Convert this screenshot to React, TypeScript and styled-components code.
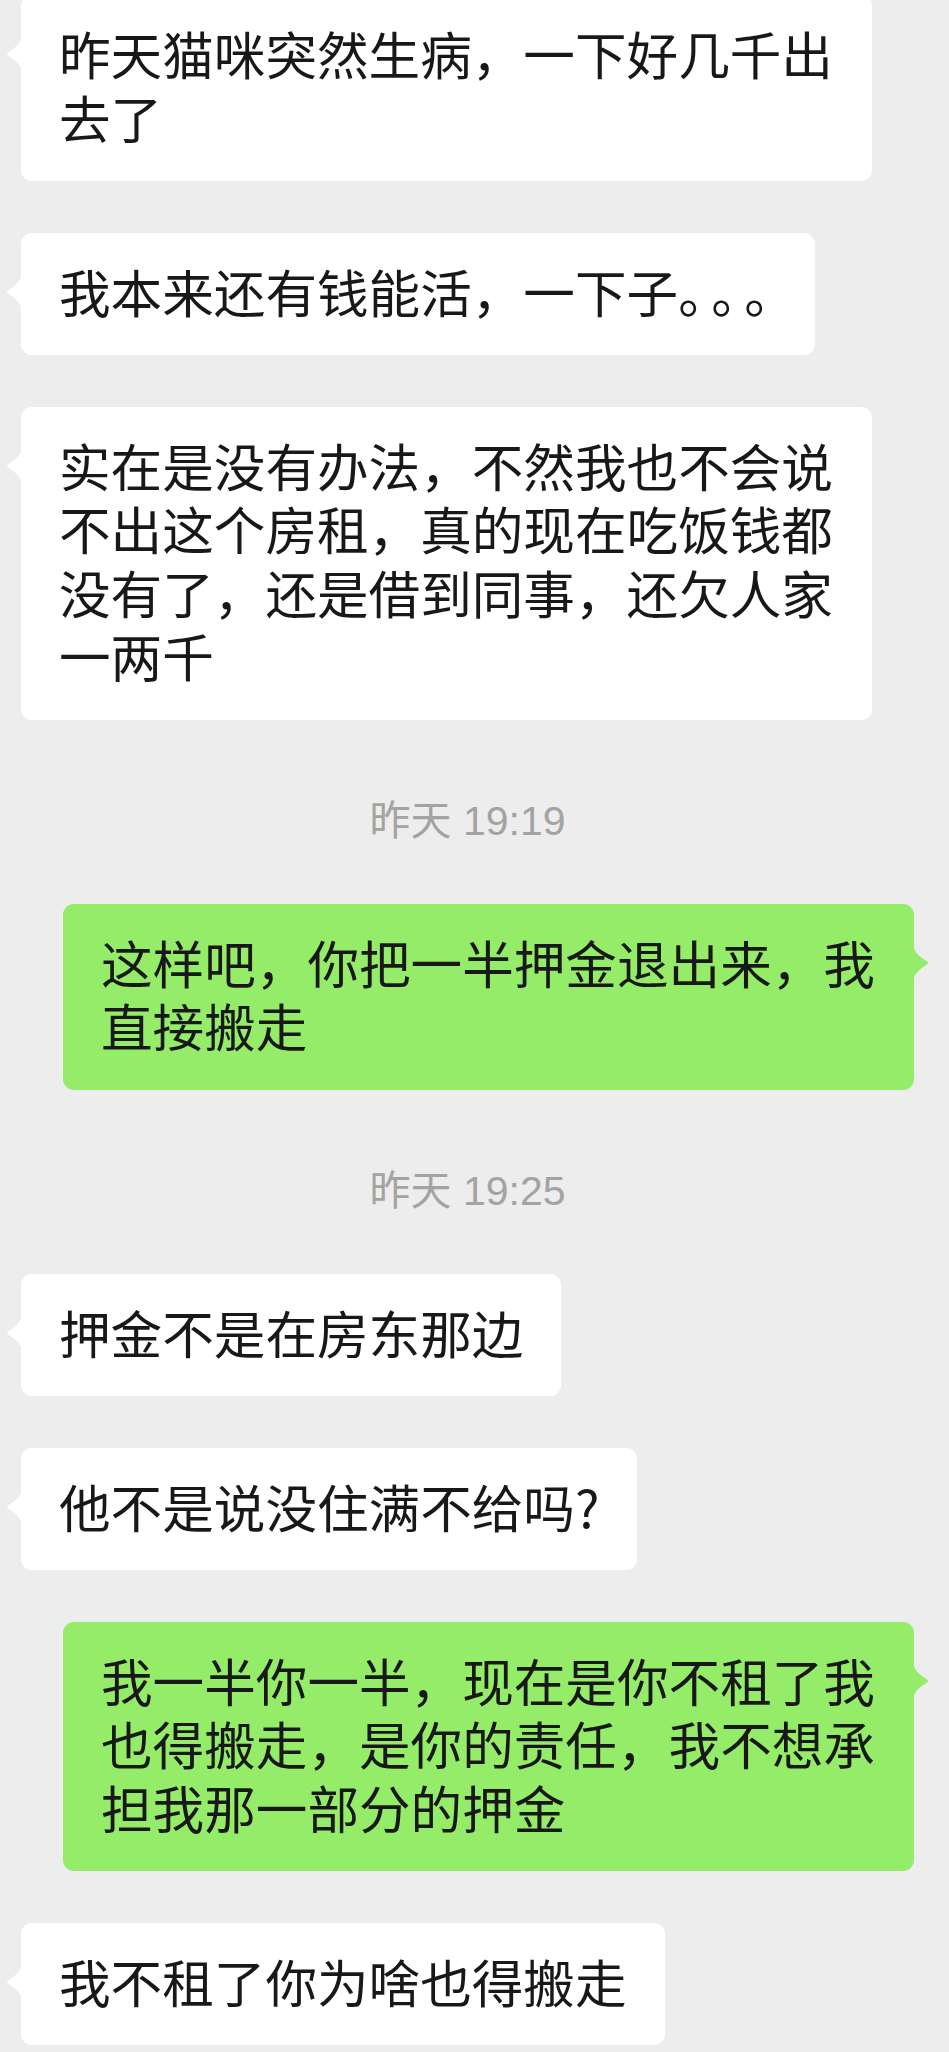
import React from 'react';
import styled, { createGlobalStyle } from 'styled-components';

const GlobalStyle = createGlobalStyle`
  html, body {
    margin: 0;
    padding: 0;
    background-color: #ededed;
  }
  body {
    font-family: "Noto Sans CJK SC", "Liberation Sans", sans-serif;
    overflow: hidden;
  }
`

const Chat = styled.div`
  display: flex;
  flex-direction: column;
  gap: 51.5px;
  padding: 0 35px 0 21px;
  /* the list is scrolled a little: the first bubble starts above the top */
  margin-top: -5px;
`

const Row = styled.div<{ $mine?: boolean }>`
  display: flex;
  justify-content: ${props => (props.$mine ? 'flex-end' : 'flex-start')};
`

const Bubble = styled.div<{ $mine?: boolean }>`
  position: relative;
  max-width: 775px;
  padding: 26px 38px 33px;
  border-radius: 11px;
  background-color: ${props => (props.$mine ? '#95ec69' : '#ffffff')};
  color: #181818;
  font-family: "Noto Sans CJK SC", "Liberation Sans", sans-serif;
  font-size: 51.6px;
  line-height: 63.5px;
`

const Tail = styled.svg<{ $mine?: boolean }>`
  position: absolute;
  top: 39px;
  width: 16px;
  height: 40px;
  ${props => (props.$mine ? 'right: -15px; transform: scaleX(-1);' : 'left: -15px;')}
`

// 连续的句号在截图里是被压缩过的
const Dots = styled.span`
  text-spacing-trim: space-all;
  letter-spacing: -18.6px;
`

const Time = styled.div`
  padding: 26px 0 6px;
  text-align: center;
  font-family: "Liberation Sans", "Noto Sans CJK SC", sans-serif;
  font-size: 41px;
  line-height: 49px;
  color: #a3a3a3;
`

const Msg = ({ mine, children }: { mine?: boolean; children: React.ReactNode }) => (
  <Row $mine={mine}>
    <Bubble $mine={mine}>
      <Tail $mine={mine} viewBox="0 0 16 40">
        <path
          d="M16 0 C16 9 9 14 2 18.5 Q0 20 2 21.5 C9 26 16 31 16 40 Z"
          fill={mine ? '#95ec69' : '#ffffff'}
        />
      </Tail>
      {children}
    </Bubble>
  </Row>
)

const App = () => {
  return (
    <>
      <GlobalStyle />
      <Chat>
        <Msg>昨天猫咪突然生病，一下好几千出去了</Msg>
        <Msg>
          我本来还有钱能活，一下子<Dots>。。。</Dots>
        </Msg>
        <Msg>实在是没有办法，不然我也不会说不出这个房租，真的现在吃饭钱都没有了，还是借到同事，还欠人家一两千</Msg>
        <Time>昨天 19:19</Time>
        <Msg mine>这样吧，你把一半押金退出来，我直接搬走</Msg>
        <Time>昨天 19:25</Time>
        <Msg>押金不是在房东那边</Msg>
        <Msg>他不是说没住满不给吗?</Msg>
        <Msg mine>我一半你一半，现在是你不租了我也得搬走，是你的责任，我不想承担我那一部分的押金</Msg>
        <Msg>我不租了你为啥也得搬走</Msg>
      </Chat>
    </>
  );
};

export default App;
